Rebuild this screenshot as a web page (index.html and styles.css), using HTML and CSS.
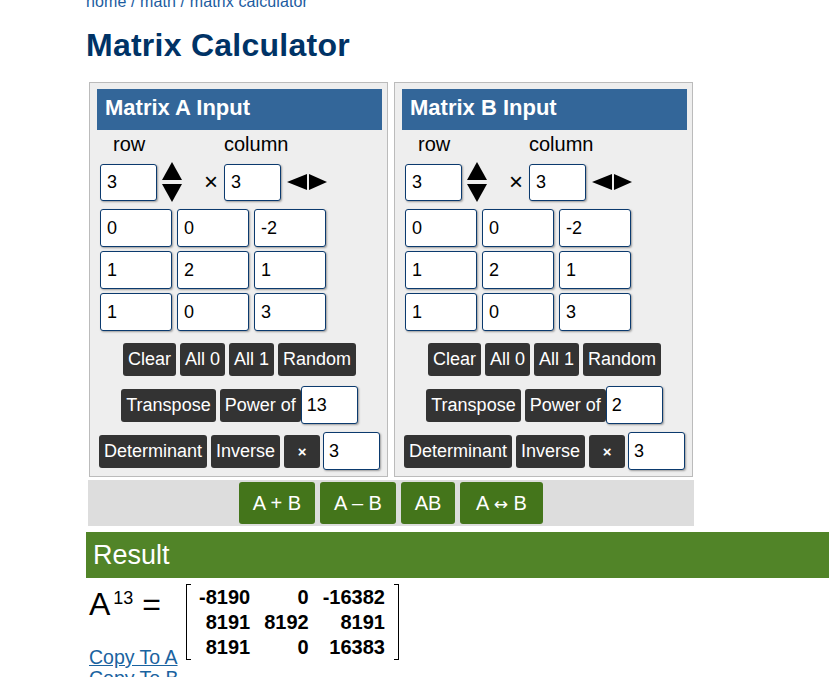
FILE: index.html
```html
<!DOCTYPE html>
<html>
<head>
<meta charset="utf-8">
<title>Matrix Calculator</title>
<link rel="stylesheet" href="styles.css">
</head>
<body>
<div class="page">
  <div class="breadcrumb"><a href="#">home</a> / <a href="#">math</a> / <a href="#">matrix calculator</a></div>
  <h1 class="title">Matrix Calculator</h1>
  <div class="calc">
    <div class="panels">
      <div class="panel">
        <div class="panel-head">Matrix A Input</div>
        <div class="labels"><span class="lbl-row">row</span><span class="lbl-col">column</span></div>
        <div class="dims">
          <input class="inp dim" value="3">
          <span class="updown">
            <svg width="20" height="18" viewBox="0 0 20 18"><polygon points="10,0 20,18 0,18"/></svg>
            <svg width="20" height="18" viewBox="0 0 20 18"><polygon points="0,0 20,0 10,18"/></svg>
          </span>
          <span class="times">×</span>
          <input class="inp dim" value="3">
          <span class="leftright">
            <svg width="20" height="16" viewBox="0 0 20 16"><polygon points="0,8 20,0 20,16"/></svg>
            <svg width="18" height="16" viewBox="0 0 18 16"><polygon points="0,0 18,8 0,16"/></svg>
          </span>
        </div>
        <div class="cells">
          <input class="inp cell" value="0"><input class="inp cell" value="0"><input class="inp cell" value="-2">
          <input class="inp cell" value="1"><input class="inp cell" value="2"><input class="inp cell" value="1">
          <input class="inp cell" value="1"><input class="inp cell" value="0"><input class="inp cell" value="3">
        </div>
        <div class="btnrow first">
          <button class="btn">Clear</button><button class="btn">All 0</button><button class="btn">All 1</button><button class="btn">Random</button>
        </div>
        <div class="btnrow">
          <button class="btn">Transpose</button>
          <span class="grp"><button class="btn">Power of</button><input class="inp small" value="13"></span>
        </div>
        <div class="btnrow">
          <button class="btn">Determinant</button><button class="btn">Inverse</button>
          <span class="grp mul"><button class="btn x">×</button><input class="inp small" value="3"></span>
        </div>
      </div>
      <div class="panel">
        <div class="panel-head">Matrix B Input</div>
        <div class="labels"><span class="lbl-row">row</span><span class="lbl-col">column</span></div>
        <div class="dims">
          <input class="inp dim" value="3">
          <span class="updown">
            <svg width="20" height="18" viewBox="0 0 20 18"><polygon points="10,0 20,18 0,18"/></svg>
            <svg width="20" height="18" viewBox="0 0 20 18"><polygon points="0,0 20,0 10,18"/></svg>
          </span>
          <span class="times">×</span>
          <input class="inp dim" value="3">
          <span class="leftright">
            <svg width="20" height="16" viewBox="0 0 20 16"><polygon points="0,8 20,0 20,16"/></svg>
            <svg width="18" height="16" viewBox="0 0 18 16"><polygon points="0,0 18,8 0,16"/></svg>
          </span>
        </div>
        <div class="cells">
          <input class="inp cell" value="0"><input class="inp cell" value="0"><input class="inp cell" value="-2">
          <input class="inp cell" value="1"><input class="inp cell" value="2"><input class="inp cell" value="1">
          <input class="inp cell" value="1"><input class="inp cell" value="0"><input class="inp cell" value="3">
        </div>
        <div class="btnrow first">
          <button class="btn">Clear</button><button class="btn">All 0</button><button class="btn">All 1</button><button class="btn">Random</button>
        </div>
        <div class="btnrow">
          <button class="btn">Transpose</button>
          <span class="grp"><button class="btn">Power of</button><input class="inp small" value="2"></span>
        </div>
        <div class="btnrow">
          <button class="btn">Determinant</button><button class="btn">Inverse</button>
          <span class="grp mul"><button class="btn x">×</button><input class="inp small" value="3"></span>
        </div>
      </div>
    </div>
    <div class="ops">
      <button class="op op-add">A + B</button><button class="op op-sub">A – B</button><button class="op op-mul">AB</button><button class="op op-swap">A <span class="arr">↔</span> B</button>
    </div>
  </div>
  <div class="result-head">Result</div>
  <div class="result">
    <div class="res-left">
      <div class="expr">A<sup class="sup">13</sup> =</div>
      <a class="copy" href="#">Copy To A</a>
      <a class="copy" href="#">Copy To B</a>
    </div>
    <div class="matrix">
      <span class="br br-l"></span>
      <table class="mtable">
        <tr><td>-8190</td><td>0</td><td>-16382</td></tr>
        <tr><td>8191</td><td>8192</td><td>8191</td></tr>
        <tr><td>8191</td><td>0</td><td>16383</td></tr>
      </table>
      <span class="br br-r"></span>
    </div>
  </div>
</div>
</body>
</html>
```

FILE: styles.css
```css
html, body {
  margin: 0;
  padding: 0;
  background: #fff;
  overflow: hidden;
}
body {
  font-family: "Liberation Sans", Arial, sans-serif;
  color: #000;
}
.page {
  padding-left: 86px;
}
.breadcrumb {
  margin-top: -7px;
  font-size: 16px;
  line-height: 18px;
  letter-spacing: 0.1px;
  color: #1c5ca0;
}
.breadcrumb a {
  color: #1c5ca0;
  text-decoration: none;
}
.title {
  margin: 16px 0 0 0;
  font-size: 32px;
  line-height: 36px;
  font-weight: bold;
  letter-spacing: 0.25px;
  color: #003366;
}
.calc {
  width: 606px;
  margin-left: 2px;
  margin-top: 19px;
}
.panels {
  display: flex;
  gap: 6px;
  padding-left: 1px;
}
.panel {
  width: 299px;
  box-sizing: border-box;
  border: 1px solid #bbb;
  background: #eee;
  padding: 6px 5px 6px 7px;
}
.panel-head {
  background: #336699;
  color: #fff;
  font-weight: bold;
  font-size: 22px;
  line-height: 26px;
  padding: 6px 8px 9px 8px;
}
.labels {
  margin-top: 3px;
  height: 22px;
  line-height: 22px;
  font-size: 20px;
  display: flex;
}
.lbl-row {
  width: 127px;
  padding-left: 16px;
  box-sizing: border-box;
}
.dims {
  margin-top: 6px;
  height: 42px;
  display: flex;
  align-items: center;
  padding-left: 3px;
}
.inp {
  box-sizing: border-box;
  border: 1px solid #0b3a6e;
  border-radius: 3px;
  box-shadow: 1px 1px 2px rgba(0, 0, 0, 0.35);
  background: #fff;
  font-family: "Liberation Sans", Arial, sans-serif;
  font-size: 18px;
  color: #000;
  padding: 0 6px;
  margin: 0;
  outline: none;
}
.dim {
  width: 57px;
  height: 37px;
}
.updown {
  display: flex;
  flex-direction: column;
  gap: 4px;
  margin-left: 5px;
}
.updown svg, .leftright svg {
  display: block;
  fill: #000;
}
.times {
  width: 12px;
  margin-left: 22px;
  margin-right: 8px;
  font-size: 24px;
  line-height: 24px;
  text-align: center;
}
.leftright {
  display: flex;
  gap: 2px;
  margin-left: 6px;
}
.cells {
  margin-top: 6px;
  padding-left: 3px;
  display: grid;
  grid-template-columns: repeat(3, 72px);
  column-gap: 5px;
  row-gap: 4px;
}
.cell {
  width: 72px;
  height: 38px;
}
.btnrow {
  margin-top: 8px;
  height: 38px;
  display: flex;
  justify-content: center;
  align-items: center;
  gap: 4px;
}
.btnrow.first {
  margin-top: 9px;
}
.btn {
  height: 33px;
  background: #333;
  color: #fff;
  border: none;
  border-radius: 3px;
  padding: 0 5px;
  margin: 0;
  font-family: "Liberation Sans", Arial, sans-serif;
  font-size: 18px;
  line-height: 33px;
}
.btn.x {
  width: 36px;
  font-size: 15px;
  font-weight: bold;
  padding: 0;
}
.grp {
  display: flex;
  align-items: center;
}
.grp.mul {
  gap: 3px;
}
.small {
  width: 57px;
  height: 38px;
  padding: 0 5px;
}
.ops {
  margin-top: 3px;
  height: 46px;
  box-sizing: border-box;
  padding: 2px 0;
  background: #ddd;
  display: flex;
  justify-content: center;
  gap: 5px;
}
.op {
  height: 42px;
  background: #44751b;
  color: #fff;
  border: none;
  border-radius: 3px;
  padding: 0;
  margin: 0;
  font-family: "Liberation Sans", Arial, sans-serif;
  font-size: 20px;
  text-align: center;
  white-space: nowrap;
}
.op-add, .op-sub {
  width: 76px;
}
.op-mul {
  width: 54px;
}
.op-swap {
  width: 83px;
}
.arr {
  font-family: "DejaVu Sans", sans-serif;
  font-size: 17px;
}
.result-head {
  margin-top: 6px;
  height: 46px;
  line-height: 46px;
  background: #518428;
  color: #fff;
  font-size: 27px;
  padding-left: 7px;
}
.result {
  display: flex;
  align-items: flex-start;
}
.res-left {
  width: 100px;
  box-sizing: border-box;
  padding-left: 3px;
  display: flex;
  flex-direction: column;
  align-items: flex-start;
}
.expr {
  margin-top: 8px;
  font-size: 32px;
  line-height: 36px;
  white-space: nowrap;
}
.sup {
  font-size: 18px;
  line-height: 0;
  vertical-align: 11px;
  margin-left: 3px;
}
.copy {
  font-size: 19.5px;
  line-height: 21px;
  color: #1a63a0;
  text-decoration: underline;
  white-space: nowrap;
}
.expr + .copy {
  margin-top: 25px;
}
.matrix {
  margin-top: 6px;
  height: 76px;
  display: flex;
}
.br {
  width: 4px;
  border: 1px solid #000;
  box-sizing: content-box;
  height: 74px;
}
.br-l {
  border-right: none;
}
.br-r {
  border-left: none;
}
.mtable {
  border-collapse: collapse;
  margin-top: 1px;
  align-self: flex-start;
}
.mtable td {
  font-size: 20px;
  font-weight: bold;
  line-height: 25px;
  height: 25px;
  padding: 0 7px 0 7px;
  text-align: right;
}
.mtable td:first-child {
  padding-left: 8px;
}
.mtable td:last-child {
  padding-right: 9px;
}
```
